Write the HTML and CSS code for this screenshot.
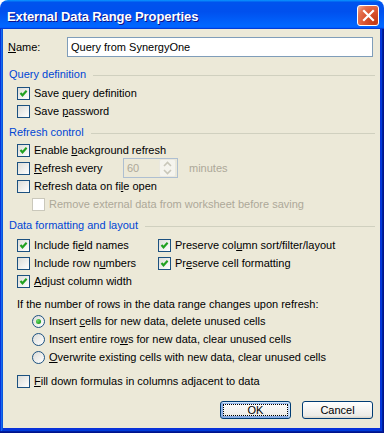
FILE: index.html
```html
<!DOCTYPE html>
<html lang="en">
<head>
    <meta charset="UTF-8">
    <title>External Data Range Properties</title>
    <link rel="stylesheet" href="styles.css">
</head>
<body>

<div class="window">
    <div class="titlebar">
        <span class="title">External Data Range Properties</span>
        <span class="close">
            <svg width="13" height="13" viewBox="0 0 13 13"><path d="M2 2L11 11M11 2L2 11" stroke="#fff" stroke-width="2.2" stroke-linecap="square"/></svg>
        </span>
    </div>
    <div class="frame">
        <div class="client">
            <div class="name-row">
                <label class="name-label"><u>N</u>ame:</label>
                <div class="textbox">Query from SynergyOne</div>
            </div>

            <div class="group-head first"><span>Query definition</span><span class="rule"></span></div>
            <div class="row">
                <span class="cb"><svg viewBox="0 0 11 11"><path d="M2.5 5L4.5 7.3L8.6 2.8" class="tick"/></svg></span>
                <span>Save <u>q</u>uery definition</span>
            </div>
            <div class="row">
                <span class="cb"></span>
                <span>Save <u>p</u>assword</span>
            </div>

            <div class="group-head"><span>Refresh control</span><span class="rule"></span></div>
            <div class="row">
                <span class="cb"><svg viewBox="0 0 11 11"><path d="M2.5 5L4.5 7.3L8.6 2.8" class="tick"/></svg></span>
                <span>Enable <u>b</u>ackground refresh</span>
            </div>
            <div class="row">
                <span class="cb"></span>
                <span class="every"><u>R</u>efresh every</span>
                <span class="spinner">
                    <span class="spin-value">60</span>
                    <span class="spin-btn">
                        <svg width="9" height="14" viewBox="0 0 9 14"><path d="M1 5L4.5 1.5L8 5M1 9L4.5 12.5L8 9" fill="none" stroke="#c9c7ba" stroke-width="1.6"/></svg>
                    </span>
                </span>
                <span class="muted minutes">minutes</span>
            </div>
            <div class="row">
                <span class="cb"></span>
                <span>Refresh data on fi<u>l</u>e open</span>
            </div>
            <div class="row nested">
                <span class="cb disabled"></span>
                <span class="muted">Remove external data from worksheet before saving</span>
            </div>

            <div class="group-head"><span>Data formatting and layout</span><span class="rule"></span></div>
            <div class="layout-grid">
                <div class="row">
                    <span class="cb"><svg viewBox="0 0 11 11"><path d="M2.5 5L4.5 7.3L8.6 2.8" class="tick"/></svg></span>
                    <span>Include fi<u>e</u>ld names</span>
                </div>
                <div class="row right">
                    <span class="cb"><svg viewBox="0 0 11 11"><path d="M2.5 5L4.5 7.3L8.6 2.8" class="tick"/></svg></span>
                    <span>Preserve col<u>u</u>mn sort/filter/layout</span>
                </div>
                <div class="row">
                    <span class="cb"></span>
                    <span>Include row n<u>u</u>mbers</span>
                </div>
                <div class="row right">
                    <span class="cb"><svg viewBox="0 0 11 11"><path d="M2.5 5L4.5 7.3L8.6 2.8" class="tick"/></svg></span>
                    <span>Pr<u>e</u>serve cell formatting</span>
                </div>
                <div class="row">
                    <span class="cb"><svg viewBox="0 0 11 11"><path d="M2.5 5L4.5 7.3L8.6 2.8" class="tick"/></svg></span>
                    <span><u>A</u>djust column width</span>
                </div>
            </div>

            <div class="question">If the number of rows in the data range changes upon refresh:</div>
            <div class="row nested">
                <span class="radio on"></span>
                <span>Insert <u>c</u>ells for new data, delete unused cells</span>
            </div>
            <div class="row nested">
                <span class="radio"></span>
                <span>Insert entire ro<u>w</u>s for new data, clear unused cells</span>
            </div>
            <div class="row nested">
                <span class="radio"></span>
                <span><u>O</u>verwrite existing cells with new data, clear unused cells</span>
            </div>

            <div class="row fill">
                <span class="cb"></span>
                <span><u>F</u>ill down formulas in columns adjacent to data</span>
            </div>

            <div class="buttons">
                <button class="btn default"><span>OK</span></button>
                <button class="btn"><span>Cancel</span></button>
            </div>
        </div>
    </div>
</div>

</body>
</html>
```

FILE: styles.css
```css
body { margin: 0; background: #fff; font-family: "Liberation Sans", Arial, sans-serif; font-size: 11px; color: #000; }
u { text-decoration: underline; text-underline-offset: 1px; }

.window { width: 384px; height: 433px; display: flex; flex-direction: column; }

.titlebar {
    height: 29px;
    box-sizing: border-box;
    display: flex;
    align-items: center;
    padding: 2px 5px 0 7px;
    border-radius: 8px 8px 0 0;
    background: linear-gradient(180deg, #0997ff, #0053ee 8%, #0050ee 40%, #0066ff 88%, #0066ff 93%, #005bff 95%, #003dd7 96%, #003dd7);
}
.title { color: #fff; font-weight: bold; font-size: 13px; letter-spacing: -0.1px; padding-top: 1px; text-shadow: 1px 1px #0f1089; }
.close {
    margin-left: auto;
    width: 20px;
    height: 19px;
    display: flex;
    align-items: center;
    justify-content: center;
    border: 1px solid #fff;
    border-radius: 3px;
    background: radial-gradient(circle at 85% 85%, #c13a16, #d9532f 45%, #e5714e 75%, #f4b49c 100%);
}

.frame {
    flex: 1;
    display: flex;
    padding: 0 4px 5px 3px;
    background: #0831d9;
    box-shadow: inset -1px -1px #00138c, inset -2px -2px #001ea0, inset 1px 0 #0831d9, inset 2px 0 #166aee, inset -3px -3px #003bda, inset 3px 0 #0855dd;
}
.client { flex: 1; background: #ece9d8; padding: 8px 5px 0 6px; }

.name-row { display: flex; align-items: center; height: 20px; }
.name-label { width: 59px; margin-left: -1px; }
.textbox {
    flex: 1;
    height: 20px;
    box-sizing: border-box;
    margin-right: 2px;
    padding: 0 3px;
    line-height: 18px;
    background: #fff;
    border: 1px solid #7f9db9;
}

.group-head { display: flex; align-items: center; height: 14px; color: #0046d5; margin-top: 5px; }
.group-head.first { margin-top: 10px; }
.group-head .rule { flex: 1; height: 1px; margin: 2px 0 0 7px; background: #d0d0bf; }

.row { display: flex; align-items: center; height: 18px; padding-left: 8px; }
.group-head + .row { margin-top: 2px; }
.group-head.first + .row { margin-top: 3px; }
.row.nested { padding-left: 23px; }
.row.right { padding-left: 0; }

.cb {
    width: 13px;
    height: 13px;
    box-sizing: border-box;
    margin-right: 4px;
    border: 1px solid #1c5180;
    background: linear-gradient(135deg, #dcdcd7, #fff);
    flex-shrink: 0;
}
.cb svg { display: block; width: 11px; height: 11px; }
.tick { fill: none; stroke: #21a121; stroke-width: 2.1; }
.cb.disabled { border-color: #cac8bb; background: #fff; }

.radio {
    width: 13px;
    height: 13px;
    box-sizing: border-box;
    margin-right: 4px;
    border: 1px solid #1c5180;
    border-radius: 50%;
    background: linear-gradient(135deg, #dcdcd7, #fff);
    display: flex;
    align-items: center;
    justify-content: center;
    flex-shrink: 0;
}
.radio.on::after { content: ""; width: 5px; height: 5px; border-radius: 50%; background: radial-gradient(circle at 35% 35%, #6bdb69, #21a121 70%); }

.muted { color: #aca899; }
.every { width: 89px; }
.spinner {
    width: 55px;
    height: 20px;
    box-sizing: border-box;
    display: flex;
    align-items: center;
    padding: 1px;
    border: 1px solid #aebfd1;
    color: #aca899;
}
.spin-value { flex: 1; padding-left: 2px; }
.spin-btn {
    width: 15px;
    height: 16px;
    display: flex;
    align-items: center;
    justify-content: center;
    border-radius: 2px;
    background: #f5f4ee;
    border: 1px solid #eae8de;
}
.minutes { margin-left: 11px; }

.layout-grid { display: grid; grid-template-columns: 149px 1fr; margin-top: 4px; }

.question { height: 14px; line-height: 14px; padding-left: 8px; margin-top: 7px; }
.question + .row { margin-top: 1px; }
.row.fill { margin-top: 6px; }

.buttons { display: flex; justify-content: flex-end; gap: 11px; margin: 11px 2px 0 0; }
.btn {
    width: 71px;
    height: 18px;
    padding: 0;
    font: inherit;
    color: #000;
    border: 1px solid #003c74;
    border-radius: 3px;
    background: linear-gradient(180deg, #fff, #ecebe6 86%, #d6d0c5);
}
.btn.default {
    box-shadow: inset -1px 1px #cee7ff, inset 1px 2px #98b8ea, inset -2px 2px #bcd4f6, inset 1px -1px #89ade4, inset 2px -2px #89ade4;
    outline: 1px dotted #000;
    outline-offset: -4px;
}
```
